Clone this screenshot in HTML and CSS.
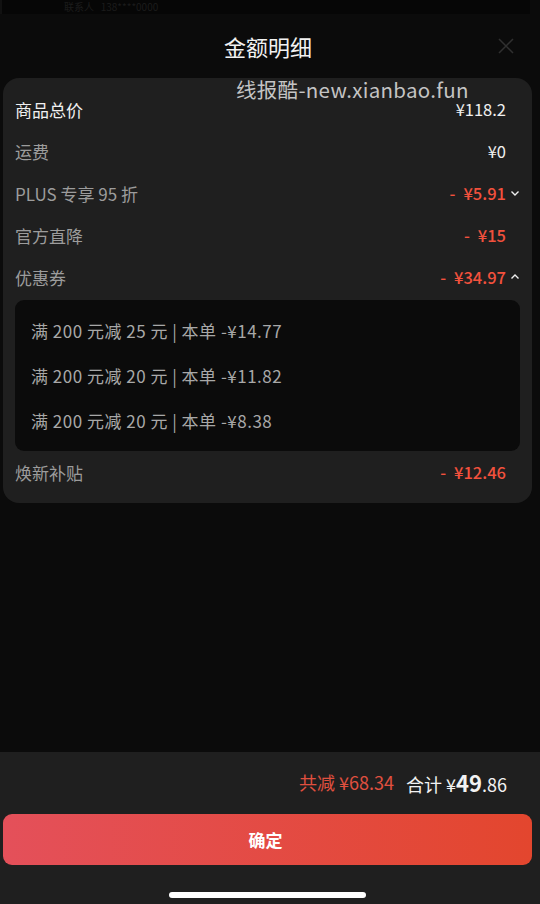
FILE: index.html
```html
<!DOCTYPE html>
<html lang="zh-CN">
<head>
    <meta charset="UTF-8">
    <meta name="viewport" content="width=device-width, initial-scale=1.0">
    <title>金额明细</title>
    <link rel="stylesheet" href="styles.css">
</head>
<body>
<div class="page">
    <div class="behind"><span>联系人 &nbsp; 138****0000</span></div>

    <div class="sheet">
        <div class="header">
            <div class="title">金额明细</div>
            <svg class="close" width="18" height="18" viewBox="0 0 18 18">
                <path d="M2 2 L16 16 M16 2 L2 16" stroke="#303030" stroke-width="1.5" fill="none"/>
            </svg>
        </div>

        <div class="card">
            <div class="mark">线报酷-new.xianbao.fun</div>
            <div class="row">
                <span class="label main">商品总价</span>
                <span class="value">¥118.2</span>
                <span class="arrow"></span>
            </div>
            <div class="row">
                <span class="label">运费</span>
                <span class="value">¥0</span>
                <span class="arrow"></span>
            </div>
            <div class="row">
                <span class="label">PLUS 专享 95 折</span>
                <span class="value red"><i>-</i>¥5.91</span>
                <span class="arrow">
                    <svg width="10" height="10" viewBox="0 0 10 10"><path d="M1.5 3.5 L5 7 L8.5 3.5" stroke="#eee" stroke-width="1.4" fill="none"/></svg>
                </span>
            </div>
            <div class="row">
                <span class="label">官方直降</span>
                <span class="value red"><i>-</i>¥15</span>
                <span class="arrow"></span>
            </div>
            <div class="row">
                <span class="label">优惠券</span>
                <span class="value red"><i>-</i>¥34.97</span>
                <span class="arrow">
                    <svg width="10" height="10" viewBox="0 0 10 10"><path d="M1.5 6.5 L5 3 L8.5 6.5" stroke="#eee" stroke-width="1.4" fill="none"/></svg>
                </span>
            </div>
            <div class="coupons">
                <div class="coupon">满 200 元减 25 元 | 本单 -¥14.77</div>
                <div class="coupon">满 200 元减 20 元 | 本单 -¥11.82</div>
                <div class="coupon">满 200 元减 20 元 | 本单 -¥8.38</div>
            </div>
            <div class="row">
                <span class="label">焕新补贴</span>
                <span class="value red"><i>-</i>¥12.46</span>
                <span class="arrow"></span>
            </div>
        </div>

        <div class="spacer"></div>

        <div class="footer">
            <div class="sum">
                <span class="saved">共减 ¥68.34</span>
                <span class="total">合计 ¥<b>49</b>.86</span>
            </div>
            <div class="btn">确定</div>
            <div class="home"></div>
        </div>
    </div>
</div>
</body>
</html>
```

FILE: styles.css
```css
* {
    box-sizing: border-box;
}
body {
    margin: 0;
    background: #0b0b0b;
    font-family: "Noto Sans CJK SC", "Noto Sans", sans-serif;
    color: #eee;
}
.page {
    width: 540px;
    height: 904px;
    display: flex;
    flex-direction: column;
    overflow: hidden;
}
.behind {
    height: 14px;
    background: #060606;
    padding-left: 62px;
    border-left: 2px solid #111;
    margin-right: 10px;
}
.behind span {
    display: block;
    font-size: 10px;
    line-height: 12px;
    padding-top: 1px;
    color: #1c1c1c;
}
.sheet {
    flex: 1;
    display: flex;
    flex-direction: column;
    background: #0b0b0b;
}
.header {
    height: 64px;
    display: flex;
    justify-content: center;
    align-items: center;
    position: relative;
    padding-right: 4px;
}
.title {
    font-size: 22px;
    font-weight: 400;
    color: #f2f2f2;
}
.close {
    position: absolute;
    right: 25px;
    top: 23px;
}
.card {
    margin: 0 8px 0 3px;
    background: #1f1f1f;
    border-radius: 16px;
    padding: 10px 12px 10px 12px;
    position: relative;
}
.mark {
    position: absolute;
    left: 233px;
    top: -1px;
    font-size: 20.5px;
    line-height: 24px;
    color: #c4c4c4;
    letter-spacing: 0.3px;
}
.row {
    height: 42px;
    display: flex;
    align-items: center;
}
.label {
    flex: 1;
    font-size: 17px;
    color: #9c9c9c;
}
.label.main {
    color: #f0f0f0;
}
.value {
    font-size: 16.5px;
    color: #f0f0f0;
}
.value.red {
    font-weight: 500;
    color: #f2513d;
}
.value i {
    font-style: normal;
    margin-right: 8px;
}
.arrow {
    width: 14px;
    display: flex;
    justify-content: flex-end;
    align-items: center;
}
.coupons {
    margin-top: 2px;
    background: #0b0b0b;
    border-radius: 9px;
    padding: 8px 16px;
}
.coupon {
    height: 45px;
    display: flex;
    align-items: center;
    font-size: 17px;
    letter-spacing: 0.5px;
    color: #a8a8a8;
}
.spacer {
    flex: 1;
}
.footer {
    height: 152px;
    background: #1f1f1f;
    display: flex;
    flex-direction: column;
}
.sum {
    height: 60px;
    display: flex;
    justify-content: flex-end;
    align-items: center;
    padding-right: 33px;
    gap: 12px;
    font-size: 18px;
}
.saved {
    color: #e0503f;
}
.total {
    color: #f2f2f2;
}
.total b {
    font-size: 22px;
    font-weight: 600;
}
.btn {
    margin: 2px 8px 0 3px;
    height: 51px;
    border-radius: 9px;
    background: linear-gradient(90deg, #e4505a, #e3462e);
    display: flex;
    justify-content: center;
    align-items: center;
    padding-right: 4px;
    font-size: 17px;
    font-weight: 600;
    color: #fff;
}
.home {
    margin: 27px 0 0 169px;
    width: 197px;
    height: 6px;
    border-radius: 3px;
    background: #fff;
}
```
